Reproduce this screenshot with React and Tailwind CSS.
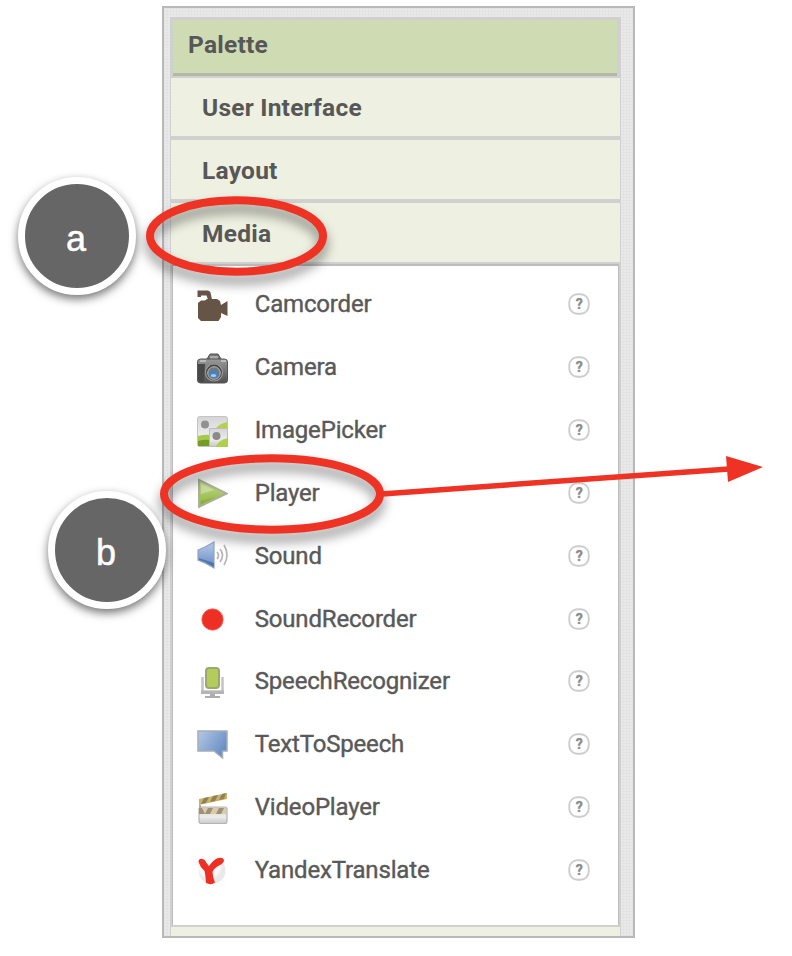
import React from "react";

function Camcorder() {
  return (
    <>
      <path d="M0.500 0.500h10q2 0 3 2l1.500 7h-4l-1.500-4H4v1.500H0.500z" fill="#665447" />
      <path d="M1 13l3-2.500h4L10 9h10l3 2 1 4 6.500-4v15L24 23v4l-2.500 4H4l-3-3z" fill="#665447" />
    </>
  );
}

function Camera() {
  return (
    <>
      <path d="M10 6l3-5h8l3 5z" fill="#777" stroke="#555" strokeWidth="1" />
      <rect x="13" y="3" width="8" height="4" fill="#aaa" />
      <rect x="0.500" y="6" width="30" height="24" rx="3" fill="url(#camBody)" stroke="#555" strokeWidth="1" />
      <path d="M1 11h7l-1 18H3l-2-3z" fill="#484848" />
      <path d="M3 7h6v2H3zM24 7h5v2h-5z" fill="#bbb" />
      <circle cx="17" cy="19.500" r="8.500" fill="#444" stroke="#999" strokeWidth="1.200" />
      <circle cx="17" cy="20" r="6.300" fill="#777" stroke="#bbb" strokeWidth="1" />
      <circle cx="17" cy="21" r="4.600" fill="#4d7fb8" />
      <ellipse cx="16.500" cy="22.500" rx="2.800" ry="1.600" fill="#a5cbee" />
    </>
  );
}

function ImagePicker() {
  return (
    <>
      <rect x="0.500" y="0.500" width="30" height="30" rx="2" fill="url(#silver)" stroke="#c4c4c4" />
      <path d="M1 20q8-2 12-1v11H1z" fill="#a9c94d" />
      <path d="M1 25q7-2 12-1v6H1z" fill="#769d22" />
      <path d="M19 12q3-4 11-6v6z" fill="#b3d04f" />
      <circle cx="8" cy="8.500" r="4" fill="#919191" />
      <rect x="12.500" y="12.500" width="18" height="18" fill="url(#silver)" stroke="#bdbdbd" />
      <path d="M19 30q3-6 12-8v9H19z" fill="#b0cf4c" />
      <circle cx="19.500" cy="20" r="4" fill="#8a8a8a" />
    </>
  );
}

function Player() {
  return (
    <>
      <path d="M2 2L29.500 15.500L2 29z" fill="url(#play)" stroke="#a9b19a" strokeWidth="2" />
      <path d="M4 5.500L17 12L4 16z" fill="#fff" opacity="0.300" />
      <path d="M4 26L20 18.500L4 23z" fill="#6f9f23" opacity="0.350" />
    </>
  );
}

function Sound() {
  return (
    <>
      <path d="M1 9l7-3 9-5v26l-9-5-7-3z" fill="url(#blue)" stroke="#91a5c4" strokeWidth="1.200" />
      <path d="M2 17l15 5v4l-9-5-6-2z" fill="#3d629e" opacity="0.650" />
      <path d="M20 11q3 3.500 0 7M23 8q5 6 0 13M27 4q6 10 0 20" fill="none" stroke="#b5b5b5" strokeWidth="1.700" />
    </>
  );
}

function SoundRecorder() {
  return <circle cx="15.500" cy="15.500" r="10.700" fill="#ee3024" stroke="#f7685d" strokeWidth="0.800" />;
}

function SpeechRecognizer() {
  return (
    <>
      <path d="M5.500 10v15h20V10" fill="none" stroke="#c4c4c4" strokeWidth="2.500" />
      <path d="M4 23.500h23v3.500H4z" fill="#b5b5b5" />
      <path d="M13 27h5v2h5v2H8v-2h5z" fill="#adadad" />
      <rect x="9" y="1" width="13" height="20" rx="3" fill="#b2cd59" stroke="#9ca771" strokeWidth="2" />
    </>
  );
}

function TextToSpeech() {
  return <path d="M1 1h29v20h-4.500v7L17 21H1z" fill="url(#speech)" stroke="#a3adbb" strokeWidth="1.500" />;
}

function VideoPlayer() {
  return (
    <>
      <path d="M2 6L30 0v6L2 12z" fill="#cbb265" />
      <path d="M7 5l5-1-3 6-5 1zM16 3l5-1-3 6-5 1zM25 1l4-1-2 6-5 1z" fill="#8e8259" />
      <rect x="2" y="14" width="28" height="16.500" rx="2" fill="url(#silver)" stroke="#b5b5b5" strokeWidth="1.200" />
      <path d="M2 15h27v6H2z" fill="#dccba4" />
      <path d="M2 15h3l3 6H2zM11 15h5l-3 6H8zM22 15h5l-3 6h-5z" fill="#9d9178" />
      <path d="M3 12v3" stroke="#aaa" strokeWidth="2" />
    </>
  );
}

function YandexTranslate() {
  return (
    <>
      <circle cx="15" cy="15.500" r="13.500" fill="url(#ball)" />
      <path
        d="M1.500 7Q1.500 3 6 4Q8.500 5 9.500 8L12 11Q16 5 21 3Q26 2 27 5Q27 8 23 10Q17 13 15.500 17Q16 23 18 27.500Q14 30.500 9 28Q8.500 20 7.500 16Q3 12 1.500 7z"
        fill="#ee3024"
      />
    </>
  );
}

const items = [
  ["Camcorder", Camcorder],
  ["Camera", Camera],
  ["ImagePicker", ImagePicker],
  ["Player", Player],
  ["Sound", Sound],
  ["SoundRecorder", SoundRecorder],
  ["SpeechRecognizer", SpeechRecognizer],
  ["TextToSpeech", TextToSpeech],
  ["VideoPlayer", VideoPlayer],
  ["YandexTranslate", YandexTranslate],
];

function Gradients() {
  return (
    <svg className="absolute h-0 w-0">
      <defs>
        <linearGradient id="camBody" x1="0" y1="0" x2="0" y2="1">
          <stop stopColor="#999" />
          <stop offset="1" stopColor="#505050" />
        </linearGradient>
        <linearGradient id="silver" x1="0" y1="0" x2="0" y2="1">
          <stop stopColor="#d5d5d5" />
          <stop offset="0.600" stopColor="#ececec" />
          <stop offset="1" stopColor="#c9c9c9" />
        </linearGradient>
        <linearGradient id="play" x1="0" y1="0" x2="0" y2="1">
          <stop stopColor="#c3d98b" />
          <stop offset="1" stopColor="#8cb53b" />
        </linearGradient>
        <linearGradient id="blue" x1="0" y1="0" x2="0" y2="1">
          <stop stopColor="#b9cce9" />
          <stop offset="1" stopColor="#6489c3" />
        </linearGradient>
        <linearGradient id="speech" x1="0" y1="0" x2="1" y2="0.600">
          <stop stopColor="#b4c9e4" />
          <stop offset="1" stopColor="#688dc3" />
        </linearGradient>
        <radialGradient id="ball" cx="0.400" cy="0.350">
          <stop stopColor="#fff" />
          <stop offset="0.750" stopColor="#f8f8f8" />
          <stop offset="1" stopColor="#e9e9e9" />
        </radialGradient>
      </defs>
    </svg>
  );
}

function Item({ name, Icon }) {
  return (
    <li className="flex h-[62.830px] items-center pr-7 pl-[23.700px]">
      <svg viewBox="0 0 31 31" className="mt-0.5 h-[31px] w-[31px] shrink-0">
        <Icon />
      </svg>
      <span className="ml-[27px] flex-1 text-2xl font-normal tracking-[-0.170px] text-[#595959] [-webkit-text-stroke:0.400px_#595959]">
        {name}
      </span>
      <svg viewBox="0 0 22 22" className="h-[22px] w-[22px]">
        <rect x="1.300" y="1.300" width="19.400" height="19.400" rx="8" fill="#fff" stroke="#cdcdcd" strokeWidth="1.900" />
        <text x="11.300" y="16" textAnchor="middle" className="text-[14px] font-bold" fill="#8c8c8c" stroke="#8c8c8c" strokeWidth="0.400">
          ?
        </text>
      </svg>
    </li>
  );
}

function Badge({ children, className }) {
  return (
    <div
      className={`absolute flex h-[118px] w-[118px] items-center justify-center rounded-full border-[7px] border-white bg-[#666] pt-1.5 pr-0.5 font-['Liberation_Sans',sans-serif] text-[36px] leading-none text-white shadow-[0_4px_10px_rgba(0,0,0,0.550)] [-webkit-text-stroke:0.500px_white] ${className}`}
    >
      {children}
    </div>
  );
}

export default function App() {
  return (
    <main className="relative h-[956px] w-[792px] overflow-hidden bg-white pt-1.5 pl-[162px] font-[Roboto,sans-serif]">
      <Gradients />
      <section className="flex h-[932px] w-[473px] border-2 border-[#b9b9b9] bg-[#e9e9e9] bg-[repeating-linear-gradient(90deg,rgba(110,110,110,0.040)_0_1px,transparent_1px_3px),repeating-linear-gradient(0deg,rgba(110,110,110,0.040)_0_1px,transparent_1px_3px)] pt-[9px] pl-1.5">
        <div className="flex w-[451px] flex-col border-x border-[#d0d0d0] bg-[#d0d0d0] pt-[3px] text-[24.500px] font-bold tracking-[0.240px] text-[#575757]">
          <h1 className="mr-[3px] ml-0.5 flex h-14 shrink-0 items-center border-b-[3px] border-[#b5b8a8] bg-[#cfdbb3] pb-[3px] pl-[15px]">
            Palette
          </h1>
          <div className="mt-0.5 flex h-[58px] shrink-0 items-center bg-[#eef0e1] pt-0.5 pl-[31px]">User Interface</div>
          <div className="mt-1 flex h-[59px] shrink-0 items-center bg-[#eef0e1] pt-[3px] pl-[31px]">Layout</div>
          <div className="mt-1 flex h-[59px] shrink-0 items-center bg-[#eef0e1] pt-[3px] pl-[31px]">Media</div>
          <ul className="mx-px mt-0.5 h-[661px] shrink-0 border-x border-t-2 border-[#bdbdbd] bg-white pt-[7px]">
            {items.map(([name, Icon]) => (
              <Item key={name} name={name} Icon={Icon} />
            ))}
          </ul>
          <div className="mt-0.5 flex-1 bg-[#eef0e1]" />
        </div>
      </section>

      <Badge className="top-[177px] left-[18px]">a</Badge>
      <Badge className="top-[491px] left-[48px]">b</Badge>

      <svg viewBox="0 0 792 956" className="absolute inset-0 h-[956px] w-[792px]" fill="none">
        <g stroke="#ee3224" strokeWidth="8" className="drop-shadow-[0_8px_6px_rgba(0,0,0,0.450)]">
          <ellipse cx="236.500" cy="236" rx="86.500" ry="35.700" />
          <ellipse cx="272" cy="494" rx="108" ry="35.700" />
        </g>
        <path d="M382 493.900L729 469" stroke="#ee3224" strokeWidth="5.500" />
        <path d="M726 456L763 467L728 482z" fill="#ee3224" />
      </svg>
    </main>
  );
}
